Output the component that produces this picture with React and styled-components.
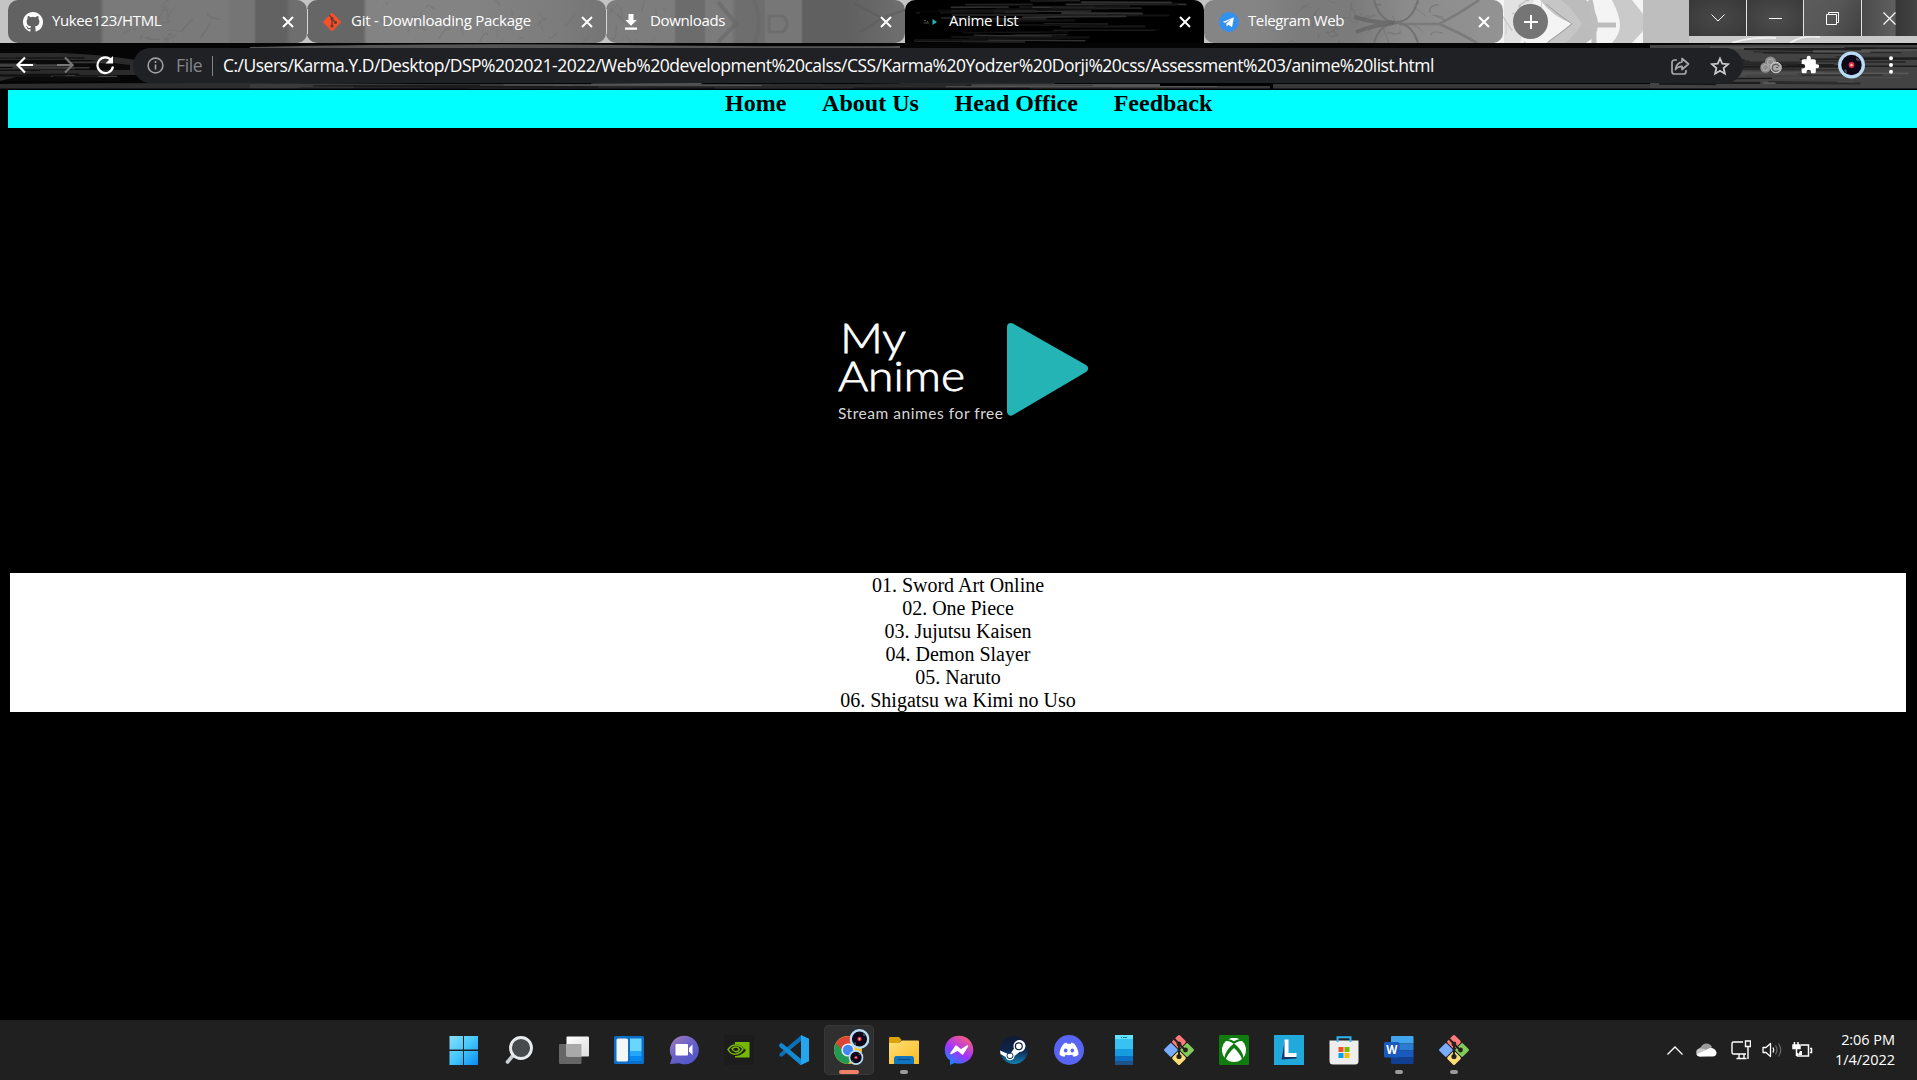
import React from "react";
import styled, { createGlobalStyle } from "styled-components";

const Global = createGlobalStyle`
  * { box-sizing: border-box; }
  html, body { margin: 0; padding: 0; background: #000; overflow: hidden; }
`;

const UI = `"Open Sans", "Noto Sans", sans-serif`;

const Screen = styled.div`
  width: 1917px;
  height: 1080px;
  display: flex;
  flex-direction: column;
  background: #000;
  font-family: ${UI};
`;

/* ---------- browser frame ---------- */

const TabStrip = styled.header`
  position: relative;
  height: 43px;
  flex: none;
  display: flex;
  padding-left: 8px;
  background: #c4c4c4;
  overflow: hidden;
`;

const Backdrop = styled.svg`
  position: absolute;
  inset: 0;
  width: 100%;
  height: 100%;
`;

const TabBox = styled.div`
  position: relative;
  width: 299px;
  height: 43px;
  flex: none;
  display: flex;
  align-items: center;
  padding: 0 12px 0 15px;
  border-radius: ${(p) => (p.$active ? "10px 10px 0 0" : "10px")};
  background: ${(p) => p.$bg};
  overflow: hidden;
  color: #fff;
`;

const TabIcon = styled.span`
  position: relative;
  width: 20px;
  height: 20px;
  margin-right: 9px;
  display: flex;
`;

const TabTitle = styled.span`
  position: relative;
  flex: 1;
  font-size: 15px;
  line-height: 20px;
  letter-spacing: ${(p) => p.$ls}px;
  white-space: nowrap;
  margin-top: -4px;
`;

const TabClose = styled.span`
  position: relative;
  width: 14px;
  height: 14px;
  display: flex;
`;

const Separator = styled.i`
  position: relative;
  z-index: 1;
  width: 1px;
  height: 25px;
  margin: 9px -1px 0 0;
  background: #d6d6d6;
  flex: none;
`;

const NewTab = styled.button`
  position: relative;
  width: 35px;
  height: 35px;
  margin: 4px 0 0 10px;
  padding: 0;
  border: 0;
  border-radius: 50%;
  background: #757575;
  display: flex;
  align-items: center;
  justify-content: center;
`;

const WindowControls = styled.div`
  position: relative;
  margin-left: auto;
  height: 36px;
  display: flex;
  gap: 1px;
  background: #e2e2e2;
`;

const Control = styled.div`
  width: ${(p) => p.$w}px;
  display: flex;
  align-items: center;
  justify-content: center;
  background: ${(p) => p.$bg};
`;

const Toolbar = styled.div`
  position: relative;
  height: 47px;
  flex: none;
  display: flex;
  align-items: center;
  padding-bottom: 3px;
  background: #000;
`;

const NavButtons = styled.div`
  position: relative;
  width: 133px;
  display: flex;
  gap: 20px;
  padding-left: 15px;
`;

const Address = styled.div`
  position: relative;
  width: 1610px;
  height: 35px;
  margin-top: 1px;
  border-radius: 18px;
  background: #202124;
  display: flex;
  align-items: center;
  padding: 0 13px 0 14px;
`;

const Scheme = styled.span`
  width: 36px;
  margin: -1px 0 0 12px;
  font-size: 17.5px;
  line-height: 24px;
  letter-spacing: -0.35px;
  color: #85878a;
`;

const Bar = styled.i`
  width: 1px;
  height: 20px;
  background: #85878a;
  margin-right: 10px;
`;

const Url = styled.span`
  flex: 1;
  margin-top: -1px;
  font-size: 17.5px;
  line-height: 24px;
  letter-spacing: ${(p) => p.$ls}px;
  color: #fff;
  white-space: nowrap;
`;

const AddressIcons = styled.div`
  display: flex;
  gap: 20px;
`;

const Extensions = styled.div`
  position: relative;
  flex: 1;
  display: flex;
  align-items: center;
  padding-left: 17px;
`;

const Slot = styled.span`
  width: ${(p) => p.$w}px;
  display: flex;
  justify-content: center;
  align-items: center;
`;

/* ---------- page ---------- */

const Page = styled.main`
  flex: 1;
  display: flex;
  flex-direction: column;
  font-family: "Liberation Serif", "Times New Roman", serif;
`;

const Menu = styled.nav`
  height: 38px;
  flex: none;
  margin-left: 8px;
  padding: 0 0 0 717px;
  display: flex;
  gap: 35.8px;
  background: #00ffff;
`;

const MenuLink = styled.a`
  font-size: 24px;
  line-height: 26px;
  font-weight: bold;
  color: #000;
  white-space: nowrap;
`;

const Hero = styled.section`
  height: 445px;
  flex: none;
  display: flex;
  justify-content: center;
  align-items: flex-start;
  padding: 187px 0 0 11px;
`;

const AnimeList = styled.ul`
  list-style: none;
  margin: 0 11px 0 10px;
  padding: 1px 0 0;
  height: 139px;
  background: #fff;
  text-align: center;
`;

const AnimeItem = styled.li`
  font-size: 20px;
  line-height: 23px;
  color: #000;
`;

/* ---------- taskbar ---------- */

const Taskbar = styled.footer`
  height: 60px;
  flex: none;
  display: grid;
  grid-template-columns: 439px 1040px 1fr;
  align-items: center;
  background: #202020;
`;

const Apps = styled.div`
  grid-column: 2;
  display: flex;
  gap: 5px;
`;

const AppButton = styled.div`
  position: relative;
  width: 50px;
  height: 50px;
  border-radius: 5px;
  display: flex;
  align-items: center;
  justify-content: center;
  background: ${(p) => (p.$active ? "#2f2f2f" : "transparent")};
  box-shadow: ${(p) => (p.$active ? "inset 0 0 0 1px #383838" : "none")};
`;

const Mark = styled.i`
  position: absolute;
  bottom: 1px;
  left: 50%;
  width: ${(p) => (p.$wide ? 20 : 8)}px;
  height: 4px;
  transform: translateX(-50%);
  border-radius: 2px;
  background: ${(p) => (p.$wide ? "#f18069" : "#9a9a9a")};
`;

const Tray = styled.div`
  display: flex;
  align-items: center;
  justify-content: flex-end;
  padding-right: 22px;
`;

const Clock = styled.div`
  width: 76px;
  margin-top: -1px;
  text-align: right;
  color: #fff;
  font-size: 14.5px;
  line-height: 20px;
  letter-spacing: -0.05px;
  white-space: nowrap;
`;

/* ---------- small drawings ---------- */

const Cross = () => (
  <svg width="14" height="14" viewBox="0 0 14 14" stroke="#fff" strokeWidth="2">
    <path d="M2 2l10 10M12 2L2 12" />
  </svg>
);

const GitHub = () => (
  <svg width="20" height="20" viewBox="0 0 16 16" fill="#fff">
    <path d="M8 0C3.58 0 0 3.58 0 8c0 3.54 2.29 6.53 5.47 7.59.4.07.55-.17.55-.38 0-.19-.01-.82-.01-1.49-2.01.37-2.53-.49-2.69-.94-.09-.23-.48-.94-.82-1.13-.28-.15-.68-.52-.01-.53.63-.01 1.08.58 1.23.82.72 1.21 1.87.87 2.33.66.07-.52.28-.87.51-1.07-1.78-.2-3.64-.89-3.64-3.95 0-.87.31-1.59.82-2.15-.08-.2-.36-1.02.08-2.12 0 0 .67-.21 2.2.82a7.6 7.6 0 0 1 4 0c1.53-1.04 2.2-.82 2.2-.82.44 1.1.16 1.92.08 2.12.51.56.82 1.27.82 2.15 0 3.07-1.87 3.75-3.65 3.95.29.25.54.73.54 1.48 0 1.07-.01 1.93-.01 2.2 0 .21.15.46.55.38A8 8 0 0 0 16 8c0-4.42-3.58-8-8-8z" />
  </svg>
);

const GitTab = () => (
  <svg width="20" height="20" viewBox="0 0 20 20">
    <rect x="3.3" y="3.3" width="13.4" height="13.4" rx="1.2" fill="#f4502b" transform="rotate(45 10 10)" />
    <g stroke="#6a3a30" strokeWidth="1.3" fill="none"><path d="M7.2 3.2L10 6v8M10 7l3.3 3.3" /></g>
    <g fill="#6a3a30"><circle cx="10" cy="6.4" r="1.6" /><circle cx="10" cy="14" r="1.6" /><circle cx="13.4" cy="10.4" r="1.6" /></g>
  </svg>
);

const Download = () => (
  <svg width="20" height="20" viewBox="0 0 20 20" fill="#fff">
    <path d="M7.5 2h5v6h3.3L10 13.8 4.2 8h3.3zM4 15.5h12v2.200H4z" />
  </svg>
);

const AnimeIcon = () => (
  <svg width="20" height="20" viewBox="0 0 20 20">
    <rect width="20" height="20" fill="#000" />
    <path d="M12.5 7v6l4.5-3z" fill="#24b4b6" />
    <path d="M4 8.5h2M7 9.5h1M4 11h5" stroke="#555" strokeWidth="1" />
  </svg>
);

const Telegram = () => (
  <svg width="20" height="20" viewBox="0 0 20 20">
    <circle cx="10" cy="10" r="10" fill="#3390ec" />
    <path d="M3.6 9.9L15 5.2l-2 10-3.5-2.5-1.8 1.8-.4-3.1 5-4.3-6 3.7z" fill="#fff" />
  </svg>
);

const Vinyl = ({ size }) => (
  <svg width={size} height={size} viewBox="0 0 28 28">
    <circle cx="14" cy="14" r="14" fill="#b9dcf6" />
    <circle cx="14" cy="14" r="10.6" fill="#0b0719" />
    <path d="M19 6a10 10 0 0 1 4 4l-4-1z M6 19l3 0 0 4a10 10 0 0 1-3-4z" fill="#55535e" />
    <circle cx="14" cy="14" r="3" fill="#e8284f" />
    <circle cx="14" cy="14" r="1.3" fill="#ffd0a0" />
  </svg>
);

const GitColor = () => (
  <svg width="32" height="32" viewBox="0 0 32 32">
    <g transform="rotate(45 16 16)">
      <rect x="5" y="5" width="10.5" height="10.5" rx="1.5" fill="#ff7b7b" />
      <rect x="16.5" y="5" width="10.5" height="10.5" rx="1.5" fill="#82cc5c" />
      <rect x="5" y="16.5" width="10.5" height="10.5" rx="1.5" fill="#79abff" />
      <rect x="16.5" y="16.5" width="10.5" height="10.5" rx="1.5" fill="#fddd77" />
    </g>
    <path d="M10 3.5L16 10v13M16 10l6 6" stroke="#26221e" strokeWidth="2" fill="none" />
    <g fill="#26221e"><circle cx="16" cy="10" r="2.4" /><circle cx="16" cy="22.5" r="2.6" /><circle cx="22.5" cy="16" r="2.4" /></g>
  </svg>
);

const appIcons = {
  start: (
    <svg width="30" height="30" viewBox="0 0 30 30">
      <defs><linearGradient id="win" x1="0" y1="0" x2="1" y2="1"><stop offset="0" stopColor="#8be0fb" /><stop offset=".5" stopColor="#43c6fb" /><stop offset="1" stopColor="#0a8bf2" /></linearGradient></defs>
      <path d="M.5 1h13.500v13.500H.5zM15 1h14v13.500H15zM.5 16h13.500v14H.5zM15 16h14v14H15z" fill="url(#win)" />
    </svg>
  ),
  search: (
    <svg width="30" height="30" viewBox="0 0 30 30">
      <path d="M9 20.500L3.500 27" stroke="#c9ced2" strokeWidth="3.600" strokeLinecap="round" />
      <circle cx="17" cy="13" r="10.500" fill="#484b4d" stroke="#e9ecee" strokeWidth="2.800" />
    </svg>
  ),
  taskview: (
    <svg width="30" height="30" viewBox="0 0 30 30">
      <defs><linearGradient id="tv" x1="0" y1="0" x2="1" y2="1"><stop offset="0" stopColor="#fff" /><stop offset="1" stopColor="#ddd" /></linearGradient></defs>
      <rect x="0" y="9" width="22.5" height="20" rx="1" fill="#666" />
      <rect x="7.5" y="1.5" width="22.5" height="20" rx="1" fill="url(#tv)" />
      <rect x="7.5" y="9" width="15" height="12.5" fill="#a9a9a9" />
    </svg>
  ),
  widgets: (
    <svg width="30" height="30" viewBox="0 0 30 30">
      <rect y="1" width="30" height="28" rx="1.5" fill="#0b6fc9" />
      <rect x="2.5" y="3.5" width="11.5" height="23" rx="1.5" fill="#f3f5f7" />
      <path d="M16 3.500h11.500V16H16z" fill="#6ad6ff" /><path d="M16 16h11.500v5H16z" fill="#25a6fb" /><path d="M16 21h11.500v5H16z" fill="#0788ef" />
    </svg>
  ),
  chat: (
    <svg width="30" height="30" viewBox="0 0 30 30">
      <defs><linearGradient id="chat" x1="0" y1="0" x2=".8" y2="1"><stop offset="0" stopColor="#a87bb9" /><stop offset=".5" stopColor="#6a62c8" /><stop offset="1" stopColor="#4f55c9" /></linearGradient></defs>
      <path d="M15 .8a14.300 14.300 0 1 1-5 27.500L1 29l2-6.500A14.300 14.300 0 0 1 15 .8z" fill="url(#chat)" />
      <rect x="6.5" y="9" width="12.5" height="11.5" rx="1" fill="#fff" /><path d="M20 13l3.500-3.500v10.500L20 16.500z" fill="#fff" />
    </svg>
  ),
  nvidia: (
    <svg width="30" height="30" viewBox="0 0 30 30">
      <rect width="30" height="30" fill="#1c1c1c" />
      <path d="M11 7h14.500v15.500H11z" fill="#76b900" />
      <path d="M3.500 14.500C7 9 13 7.500 18 11.500c3 2.500 4 4 4 4s-5 6-11 5.500c-4-.5-7.500-6.500-7.500-6.500z" fill="#1c1c1c" />
      <g fill="none" stroke="#76b900" strokeWidth="1.5"><path d="M4 14.500c4-6 11-6 15-.5-4 6.500-11.500 7-15 .5z" /><path d="M8 14c2.500-3 6-2.500 7.500.5-2 3-5.500 3-7.500-.5z" /></g>
    </svg>
  ),
  vscode: (
    <svg width="30" height="30" viewBox="0 0 30 30">
      <path d="M2.5 22L22.500 5.500V0L.8 18.500q-1 1.500 0 2.500z" fill="#0a70b8" />
      <path d="M2.5 8.300L22 24.500V30L.8 11.500q-.8-1 0-2z" fill="#1389d2" stroke="#1389d2" strokeWidth="1" />
      <path d="M22 0l8 3.700v22.600L22 30z" fill="#25a5f0" />
    </svg>
  ),
  chrome: (
    <svg width="42" height="42" viewBox="0 0 42 42">
      <g transform="translate(-1 0)">
        <circle cx="21" cy="21" r="14" fill="#fbc21b" />
        <path d="M21 21L8.900 14A14 14 0 0 0 21 35l6-10z" fill="#229955" />
        <path d="M21 14.500h12.300A14 14 0 0 0 9 14l6 7z" fill="#db4437" />
        <circle cx="21" cy="21" r="6.6" fill="#f0f2f4" /><circle cx="21" cy="21" r="5.2" fill="#4285f4" />
      </g>
      <g transform="translate(21.500 0)"><Vinyl size={20} /></g>
      <g transform="translate(20.500 21)"><Vinyl size={15} /></g>
    </svg>
  ),
  folder: (
    <svg width="30" height="30" viewBox="0 0 30 30">
      <defs><linearGradient id="fo" x1="0" y1="0" x2="1" y2="1"><stop offset="0" stopColor="#ffdf76" /><stop offset="1" stopColor="#f9bb22" /></linearGradient></defs>
      <path d="M0 3a1 1 0 0 1 1-1h9l3 3.500h-1L10 9H0z" fill="#dea204" />
      <path d="M0 8h10l3-2.500h16a1 1 0 0 1 1 1V29H0z" fill="url(#fo)" />
      <path d="M5 29v-5.500a2.500 2.500 0 0 1 2.500-2.500h15a2.500 2.500 0 0 1 2.500 2.500V29z" fill="#0f75bf" /><path d="M8.500 24.500h13" stroke="#084f87" strokeWidth="1.3" />
    </svg>
  ),
  messenger: (
    <svg width="30" height="30" viewBox="0 0 30 30">
      <defs><linearGradient id="ms" x1=".2" y1="1" x2=".8" y2="0"><stop offset="0" stopColor="#0a8cff" /><stop offset=".45" stopColor="#a033ff" /><stop offset="1" stopColor="#ff5f76" /></linearGradient></defs>
      <path d="M15 .7c8 0 14.300 6 14.300 14S23 28.600 15 28.600c-1.500 0-3-.2-4.300-.6L6 30v-4.500C2.600 23 .8 19.300.8 14.700.8 6.700 7 .7 15 .7z" fill="url(#ms)" />
      <path d="M7 18.500L12 11l5 4 6.500-4L18.500 19l-5-4z" fill="#fff" stroke="#fff" strokeWidth="1.5" strokeLinejoin="round" />
    </svg>
  ),
  steam: (
    <svg width="30" height="30" viewBox="0 0 30 30">
      <defs><linearGradient id="st" x1="0" y1="0" x2="0" y2="1"><stop offset="0" stopColor="#101b35" /><stop offset=".5" stopColor="#0d2449" /><stop offset="1" stopColor="#137fb4" /></linearGradient></defs>
      <circle cx="15" cy="15" r="14" fill="url(#st)" />
      <path d="M1 15.500l7.500 3.200 3 0 3.500-5.200a6 6 0 1 1 5.500 3.500l-5 4a4.500 4.500 0 0 1-8.800 1L1.500 19z" fill="#fff" />
      <circle cx="19.8" cy="11.2" r="4" fill="#10203e" /><circle cx="19.8" cy="11.2" r="2.8" fill="#fff" />
      <circle cx="11" cy="20.7" r="3" fill="none" stroke="#10305a" strokeWidth="1" />
    </svg>
  ),
  discord: (
    <svg width="30" height="30" viewBox="0 0 30 30">
      <circle cx="15" cy="15" r="15" fill="#5865f2" />
      <path d="M10 8.500l2.500-.9.700 1.100h3.600l.7-1.100 2.500.9c3 3 4.500 7.500 4.500 11-1.500 1.500-3.500 2.100-5 2.300l-1.200-2c-2 .5-4.600.5-6.600 0l-1.200 2c-1.500-.2-3.500-.8-5-2.300 0-3.500 1.500-8 4.500-11z" fill="#fff" />
      <ellipse cx="11.7" cy="15.5" rx="1.8" ry="2" fill="#5865f2" /><ellipse cx="18.3" cy="15.5" rx="1.8" ry="2" fill="#5865f2" />
    </svg>
  ),
  phone: (
    <svg width="18" height="30" viewBox="0 0 18 30">
      <rect width="18" height="30" rx="1" fill="#37c2f2" /><path d="M0 14h18v7H0z" fill="#159bdf" /><path d="M0 21h18v5H0z" fill="#0a70c4" /><path d="M0 26h18v4H0z" fill="#1c5389" />
      <path d="M0 0h18v4H0z" fill="#62e2fb" /><path d="M8 2.500h4M6 2.500h1" stroke="#15729c" strokeWidth="1" />
    </svg>
  ),
  git: <GitColor />,
  xbox: (
    <svg width="30" height="30" viewBox="0 0 30 30">
      <rect width="30" height="30" rx="1.5" fill="#107c10" />
      <circle cx="15" cy="15" r="12" fill="#fff" />
      <path d="M6.500 6.200C9.500 5.500 13 7.500 15 9c2-1.500 5.500-3.500 8.500-2.800l-2-2.200h-13z" fill="#107c10" />
      <path d="M15 8.500C11 11 5 18 5.500 24.500l1 1C8 20 12.500 15 15 13c2.500 2 7 7 8.500 12.500l1-1C25 18 19 11 15 8.500z" fill="#107c10" />
      <path d="M9.500 4.300a12 12 0 0 1 11 0C18.500 4.300 16 5.600 15 6.300c-1-.7-3.500-2-5.500-2z" fill="#fff" />
    </svg>
  ),
  lapp: (
    <svg width="30" height="30" viewBox="0 0 30 30">
      <rect width="30" height="30" fill="#22a9dc" />
      <path d="M11 5v16.500h11.500v2L7.500 24.500z" fill="#15346b" />
      <path d="M10.500 4.500h4V18h8v4h-12z" fill="#fff" />
    </svg>
  ),
  store: (
    <svg width="30" height="30" viewBox="0 0 30 30">
      <path d="M.5 5.500h29V26a3.500 3.500 0 0 1-3.500 3.500H4A3.500 3.500 0 0 1 .5 26z" fill="#eee" />
      <path d="M8.500 7V2.200h13V7" fill="none" stroke="#29b6f6" strokeWidth="2" />
      <path d="M9.500 12h5v5h-5z" fill="#f25022" /><path d="M15.500 12h5v5h-5z" fill="#7fba00" /><path d="M9.500 18h5v5h-5z" fill="#00a4ef" /><path d="M15.500 18h5v5h-5z" fill="#ffb900" />
    </svg>
  ),
  word: (
    <svg width="30" height="30" viewBox="0 0 30 30">
      <path d="M7 2a1 1 0 0 1 1-1h20.500a1 1 0 0 1 1 1v6.500H7z" fill="#41a5ee" /><path d="M7 8.500h22.500v7H7z" fill="#2b7cd3" /><path d="M7 15.500h22.500v7H7z" fill="#185abd" /><path d="M7 22.500h22.500V28a1 1 0 0 1-1 1H8a1 1 0 0 1-1-1z" fill="#103f91" />
      <rect x="0" y="7" width="15.5" height="15.5" rx="1.5" fill="#185abd" />
      <text x="7.7" y="18.8" textAnchor="middle" fontFamily="Open Sans" fontWeight="700" fontSize="11.5" fill="#fff">W</text>
    </svg>
  ),
};

const apps = [
  { id: "start" }, { id: "search" }, { id: "taskview" }, { id: "widgets" }, { id: "chat" },
  { id: "nvidia" }, { id: "vscode" }, { id: "chrome", active: true }, { id: "folder", open: true },
  { id: "messenger" }, { id: "steam" }, { id: "discord" }, { id: "phone" }, { id: "git" },
  { id: "xbox" }, { id: "lapp" }, { id: "store" }, { id: "word", open: true }, { id: "git", open: true },
];

const tabs = [
  { title: "Yukee123/HTML", icon: <GitHub />, ls: -0.38, sep: true, bg: "linear-gradient(90deg,#626262 0 92px,#7a7a7a 96px 220px,#757575 222px 246px,#626262 248px 278px,#6e6e6e 282px)" },
  { title: "Git - Downloading Package", icon: <GitTab />, ls: -0.25, sep: true, bg: "linear-gradient(90deg,#666 0 56px,#838383 60px 160px,#7c7c7c 250px,#757575)" },
  { title: "Downloads", icon: <Download />, ls: -0.35, bg: "linear-gradient(90deg,#7d7d7d 0 68px,#6c6c6c 70px 98px,#7b7b7b 100px 125px,#6e6e6e 130px 158px,#777 160px 195px,#606060 197px 240px,#6f6f6f)" },
  { title: "Anime List", icon: <AnimeIcon />, ls: -0.35, active: true, bg: "#000" },
  { title: "Telegram Web", icon: <Telegram />, ls: -0.4, bg: "linear-gradient(90deg,#858585 0 50px,#7b7b7b 100px 150px,#8b8b8b 200px,#939393)" },
];

const seeded = (seed) => () => {
  seed = (seed * 16807) % 2147483647;
  return seed / 2147483647;
};

/* Brushed horizontal strokes of the toolbar theme. */
const streaks = (seed, count, x0, x1, y0, y1, colors, len) => {
  const r = seeded(seed);
  return Array.from({ length: count }, (_, i) => {
    const x = x0 + r() * (x1 - x0);
    const y = y0 + r() * (y1 - y0);
    const w = len * (0.5 + r());
    const d = (r() - 0.5) * 2;
    return (
      <path key={seed + "-" + i} d={`M${x} ${y}q${w / 2} ${d} ${w} ${d}`} stroke={colors[Math.floor(r() * colors.length)]} strokeWidth={0.8 + r() * 1.6} fill="none" strokeLinecap="round" />
    );
  });
};

/* Thin branches seen through the translucent tabs. */
const branches = (seed, count, x0, x1, color) => {
  const r = seeded(seed);
  return Array.from({ length: count }, (_, i) => {
    const x = x0 + r() * (x1 - x0);
    const y = r() * 43;
    return <path key={seed + "-" + i} d={`M${x} ${y}q${r() * 10 - 5} ${r() * 16 - 8} ${r() * 26 - 13} ${r() * 30 - 15}`} stroke={color} strokeOpacity="0.6" strokeWidth={0.6 + r() * 0.8} fill="none" />;
  });
};

const TabTexture = ({ i }) => (
  <Backdrop viewBox="0 0 299 43" preserveAspectRatio="none">
    {i === 0 && branches(11, 22, 105, 205, "#6d6d6d")}
    {i === 1 && branches(23, 30, 70, 285, "#727272")}
    {i === 2 && (
      <g fill="none" strokeOpacity="0.6">
        {branches(37, 14, 5, 65, "#707070")}
        <path d="M112 2l18 22-18 18M148 0q10 22 0 43" stroke="#676767" strokeWidth="4" />
        <path d="M163 16h14q8 8 0 16h-14z" stroke="#686868" strokeWidth="3" />
        <path d="M248 3l28 15 23-8M276 18l-22 14" stroke="#5b5b5b" strokeWidth="2.5" />
      </g>
    )}
    {i === 3 && streaks(91, 40, 10, 180, 1, 42, ["#161616", "#202020", "#303030", "#121212"], 80)}
    {i === 4 && (
      <g fill="none" stroke="#6b6b6b" strokeOpacity="0.75">
        {branches(53, 34, 90, 240, "#6e6e6e")}
        <path d="M170 0q6 22 22 22t22-22M170 43q6-20 22-20t22 20" strokeWidth="2" />
        <path d="M235 24Q255 14 275 0M235 24q20 8 38 19M195 24h40" strokeWidth="2.5" stroke="#747474" />
        <path d="M150 17q20 6 40 6-20 2-38 9" strokeWidth="4" stroke="#646464" />
      </g>
    )}
  </Backdrop>
);

const Tab = ({ tab, i }) => (
  <>
    <TabBox $active={tab.active} $bg={tab.bg}>
      <TabTexture i={i} />
      <TabIcon>{tab.icon}</TabIcon>
      <TabTitle $ls={tab.ls}>{tab.title}</TabTitle>
      <TabClose><Cross /></TabClose>
    </TabBox>
    {tab.sep && <Separator />}
  </>
);

const Logo = () => (
  <svg width="252" height="112" viewBox="838 315 252 112">
    <g fill="#fff" stroke="#fff" strokeWidth="0.8" fontFamily="Lato, sans-serif" fontWeight="300">
      <text x="840" y="353" fontSize="41" textLength="66" lengthAdjust="spacingAndGlyphs">My</text>
      <text x="838" y="391" fontSize="41" textLength="127" lengthAdjust="spacingAndGlyphs">Anime</text>
    </g>
    <text x="838" y="419" fontSize="15.5" fill="#d8d8d8" fontFamily="Lato, sans-serif" textLength="165" lengthAdjust="spacing">Stream animes for free</text>
    <path d="M1011 327L1084 368.500 1011 411.500z" fill="#24b4b6" stroke="#24b4b6" strokeWidth="8" strokeLinejoin="round" />
  </svg>
);

export default function App() {
  return (
    <Screen>
      <Global />
      <TabStrip>
        <Backdrop viewBox="0 0 1917 43" preserveAspectRatio="none">
          <path d="M1495 0h148v43h-148z" fill="#f4f4f4" />
          <path d="M1504 0h30l-14 43h-16z" fill="#e2e2e2" />
          <path d="M1540 0q14 18 32 23-12 10-26 20h24q8-10 22-18-14-12-16-25z" fill="#c6c6c6" />
          <path d="M1561 0h25q12 12 12 24t-12 19h-20q10-10 16-19-8-14-21-24z" fill="#bcbcbc" />
          <path d="M1612 0h20l11 14v17l-11 12h-20q8-9 8-18t-8-25z" fill="#cacaca" />
          <path d="M1590 0q4 14 4 43M1586 25h30" stroke="#bdbdbd" strokeWidth="5" fill="none" />
          <path d="M1546 4q14 12 26 20-10 8-24 18" stroke="#9c9c9c" strokeWidth="1" fill="none" />
          <path d="M1643 0h46v43h-46z" fill="#bebebe" />
          <path d="M1689 36h228v7h-228z" fill="#c9c9c9" />
          {branches(77, 12, 1500, 1545, "#aaa")}
          <path d="M1732 43q18-6 44-5M1790 43q12-8 30-6" stroke="#eee" strokeWidth="2" fill="none" />
        </Backdrop>
        {tabs.map((t, i) => <Tab key={t.title} tab={t} i={i} />)}
        <NewTab>
          <svg width="16" height="16" viewBox="0 0 16 16" stroke="#fff" strokeWidth="2"><path d="M8 1v14M1 8h14" /></svg>
        </NewTab>
        <WindowControls>
          <Control $w={57} $bg="radial-gradient(#484848,#383838)"><svg width="14" height="8" viewBox="0 0 14 8" stroke="#fff" fill="none"><path d="M.5.5L7 7 13.500.5" /></svg></Control>
          <Control $w={56} $bg="radial-gradient(#4d4d4d,#3a3a3a)"><svg width="13" height="1"><path d="M0 .5h13" stroke="#fff" /></svg></Control>
          <Control $w={57} $bg="linear-gradient(120deg,#5c5c5c,#565656,#404040)"><svg width="13" height="13" viewBox="0 0 13 13" stroke="#fff" fill="none"><path d="M.5 2.500h10v10H.5zM2.500 2.500v-2h10v10h-2" /></svg></Control>
          <Control $w={55} $bg="linear-gradient(90deg,#4a4a4a,#606060 60%,#363636 62%,#444)"><svg width="13" height="13" viewBox="0 0 13 13" stroke="#fff" strokeWidth="1.2"><path d="M.5.5l12 12M12.500.5l-12 12" /></svg></Control>
        </WindowControls>
      </TabStrip>

      <Toolbar>
        <Backdrop viewBox="0 0 1917 47" preserveAspectRatio="none">
          <rect width="1917" height="47" fill="#050505" />
          <path d="M0 10h60q50 2 80 8v14H60L0 38z" fill="#2b2b2b" />
          <path d="M0 17h90l40 5v5H0zM20 33h100v5H0z" fill="#0a0a0a" />
          <path d="M0 41q200-2 420 0v5H0z" fill="#2d2d2d" />
          {streaks(5, 14, -60, 80, 10, 38, ["#111", "#444", "#383838"], 70)}
          <path d="M250 4Q420 0 620 2T900 3V5H250z" fill="#555" />
          <path d="M250 41h1020v5H250z" fill="#3a3a3a" />
          {streaks(15, 24, 300, 1100, 41, 45, ["#1c1c1c", "#555", "#2a2a2a"], 200)}
          <path d="M1160 40h113v3h-113z" fill="#000" />
          <path d="M1273 41h644v5h-644z" fill="#383838" />
          <path d="M1650 2q100-1 267 0v44h-267z" fill="#434343" />
          {streaks(45, 34, 1660, 1860, 4, 44, ["#1d1d1d", "#2a2a2a", "#575757", "#4e4e4e", "#181818"], 110)}
          <path d="M0 45.500h1917v1.500H0z" fill="#000" />
        </Backdrop>
        <NavButtons>
          <svg width="20" height="20" viewBox="0 0 20 20" fill="none" stroke="#fff" strokeWidth="2.2"><path d="M18 10H3M10 2.500L2.500 10l7.500 7.500" /></svg>
          <svg width="20" height="20" viewBox="0 0 20 20" fill="none" stroke="#777" strokeWidth="2"><path d="M2 10h15M10 2.500l7.500 7.500-7.500 7.500" /></svg>
          <svg width="20" height="20" viewBox="0 0 20 20" fill="none" stroke="#fff" strokeWidth="2.2"><path d="M16.500 5.500A7.800 7.800 0 1 0 18 11.500" /><path d="M18 1v7.500h-7.500z" fill="#fff" stroke="none" /></svg>
        </NavButtons>
        <Address>
          <svg width="17" height="17" viewBox="0 0 17 17"><circle cx="8.5" cy="8.5" r="7.4" fill="none" stroke="#9aa0a6" strokeWidth="1.6" /><path d="M8.500 7.500v5M8.500 4v2" stroke="#9aa0a6" strokeWidth="1.7" /></svg>
          <Scheme>File</Scheme>
          <Bar />
          <Url $ls={-0.505}>C:/Users/Karma.Y.D/Desktop/DSP%202021-2022/Web%20development%20calss/CSS/Karma%20Yodzer%20Dorji%20css/Assessment%203/anime%20list.html</Url>
          <AddressIcons>
            <svg width="20" height="20" viewBox="0 0 20 20" fill="none" stroke="#a9a9ab" strokeWidth="1.7"><path d="M7 4H4.500A2.500 2.500 0 0 0 2 6.500v9A2.500 2.500 0 0 0 4.500 18h9a2.500 2.500 0 0 0 2.500-2.500V14" /><path d="M12 2.500L18.500 8 12 13.500v-3.200c-3 0-5 1-6.500 3.200.5-4 2.500-7 6.500-7.700z" strokeLinejoin="round" /></svg>
            <svg width="20" height="20" viewBox="0 0 20 20" fill="none" stroke="#c9c9cb" strokeWidth="1.8"><path d="M10 2.500l2.200 5.200 5.800.5-4.400 3.800 1.300 5.700L10 14.700l-4.900 3 1.300-5.700L2 8.200l5.800-.5z" /></svg>
          </AddressIcons>
        </Address>
        <Extensions>
          <Slot $w={22}>
            <svg width="22" height="18" viewBox="0 0 22 18"><g fill="#8d8d8d"><circle cx="5.5" cy="11.5" r="5.3" /><circle cx="10.5" cy="6" r="5.5" /></g><g fill="none" stroke="#bbb" strokeWidth=".8"><circle cx="10.5" cy="6" r="3" /><circle cx="5.5" cy="11.5" r="3" /></g><circle cx="16" cy="11.5" r="5.3" fill="#aaa" stroke="#ccc" /><path d="M18.500 14a3.500 3.500 0 1 1 .5-3.500M16 11.500h2" fill="none" stroke="#555" strokeWidth="1.2" /></svg>
          </Slot>
          <Slot $w={56}>
            <svg width="20" height="20" viewBox="0 0 24 24" fill="#fff"><path d="M20.500 11H19V7a2 2 0 0 0-2-2h-4V3.500a2.500 2.500 0 0 0-5 0V5H4a2 2 0 0 0-2 2v3.800h1.500a2.700 2.700 0 0 1 0 5.400H2V20a2 2 0 0 0 2 2h3.800v-1.500a2.700 2.700 0 0 1 5.400 0V22H17a2 2 0 0 0 2-2v-4h1.500a2.500 2.500 0 0 0 0-5z" /></svg>
          </Slot>
          <Slot $w={27}><Vinyl size={28} /></Slot>
          <Slot $w={52}>
            <svg width="4" height="18" viewBox="0 0 4 18" fill="#fff"><circle cx="2" cy="2.2" r="2" /><circle cx="2" cy="9" r="2" /><circle cx="2" cy="15.8" r="2" /></svg>
          </Slot>
        </Extensions>
      </Toolbar>

      <Page>
        <Menu>
          {["Home", "About Us", "Head Office", "Feedback"].map((m) => <MenuLink key={m}>{m}</MenuLink>)}
        </Menu>
        <Hero><Logo /></Hero>
        <AnimeList>
          {["Sword Art Online", "One Piece", "Jujutsu Kaisen", "Demon Slayer", "Naruto", "Shigatsu wa Kimi no Uso"].map((a, i) => (
            <AnimeItem key={a}>{`0${i + 1}. ${a}`}</AnimeItem>
          ))}
        </AnimeList>
      </Page>

      <Taskbar>
        <Apps>
          {apps.map((a, i) => (
            <AppButton key={i} $active={a.active}>
              {appIcons[a.id]}
              {(a.active || a.open) && <Mark $wide={a.active} />}
            </AppButton>
          ))}
        </Apps>
        <Tray>
          <Slot $w={30}><svg width="16" height="9" viewBox="0 0 16 9" fill="none" stroke="#fff" strokeWidth="1.3"><path d="M.5 8.500L8 1l7.500 7.500" /></svg></Slot>
          <Slot $w={32}><svg width="21" height="14" viewBox="0 0 21 14"><path d="M4 11a4 4 0 0 1 1-7A6 6 0 0 1 16 4l-6 8z" fill="#9b9b9b" /><path d="M4.500 13.500a4 4 0 0 1-.5-8q4-.5 7 2l5 5z" fill="#c9c9c9" /><path d="M4 13.500q-2.500 0-3.500-2L14 5q5-.5 6.500 4.500 0 4-4 4z" fill="#fff" /></svg></Slot>
          <Slot $w={37}><svg width="20" height="20" viewBox="0 0 20 20" fill="none" stroke="#fff" strokeWidth="1.4"><path d="M12 2H2.500A1.500 1.500 0 0 0 1 3.500v9A1.500 1.500 0 0 0 2.500 14H15M5.500 18.500h10M8 14v4M13 14v4" /><path d="M14.500 1h5v5.500h-5zM17 6.500V19" /></svg></Slot>
          <Slot $w={26}><svg width="21" height="18" viewBox="0 0 21 18" fill="none" stroke="#fff" strokeWidth="1.3"><path d="M1 6.500h3L8.500 2.500v13L4 11.500H1z" strokeLinejoin="round" /><path d="M11 6.500q1.500 2.500 0 5" /><path d="M13.500 4.500q3 4.500 0 9M16.500 2.500q4.500 6.500 0 13" stroke="#666" /></svg></Slot>
          <Slot $w={34}><svg width="21" height="18" viewBox="0 0 21 18" fill="none" stroke="#fff" strokeWidth="1.5"><path d="M9 4h7.500v11H5.500v-3M18 7.500h1.500v4H18" /><path d="M2.500 1v3M6 1v3M1 4h7v3.500H1zM4.500 8v7" fill="#fff" /><path d="M8 10h2v4H6z" fill="#fff" stroke="none" /></svg></Slot>
          <Clock>2:06 PM<br />1/4/2022</Clock>
        </Tray>
      </Taskbar>
    </Screen>
  );
}
